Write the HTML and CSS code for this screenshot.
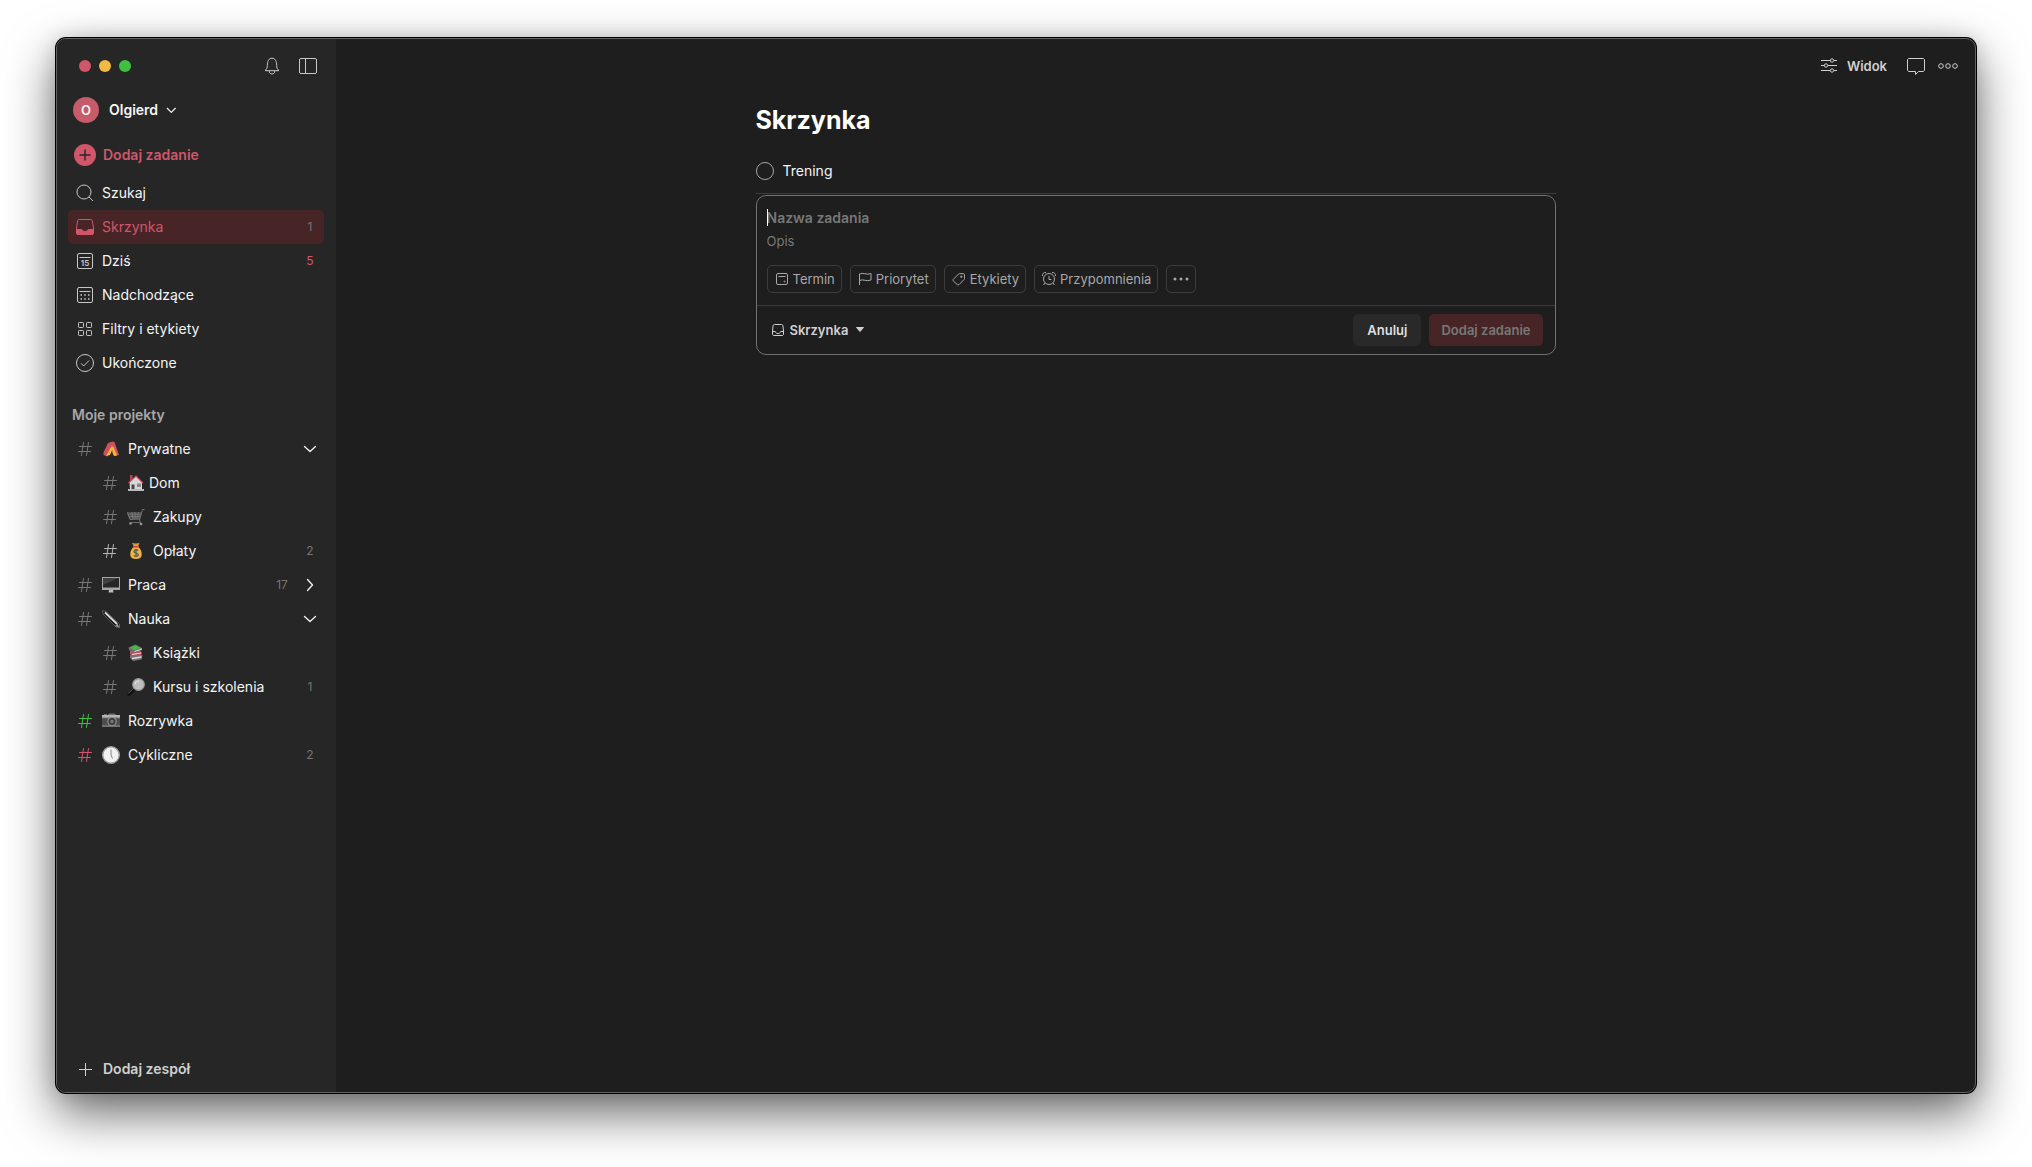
FILE: index.html
```html
<!DOCTYPE html>
<html lang="pl">
<head>
<meta charset="utf-8">
<meta name="viewport" content="width=device-width, initial-scale=1">
<title>Skrzynka</title>
<link rel="stylesheet" href="styles.css">
</head>
<body>
<svg class="sprite" aria-hidden="true">
  <symbol id="hash" viewBox="0 0 24 24"><path d="M10.500 5.500 8.500 18.500M15.500 5.500 13.500 18.500M6.500 9.500H18.500M5.500 14.500H17.500" fill="none" stroke="currentColor" stroke-linecap="round"/></symbol>
  <symbol id="chevron" viewBox="0 0 24 24"><path d="m6.500 9.500 5.500 5 5.500-5" fill="none" stroke="currentColor" stroke-width="1.300" stroke-linecap="round" stroke-linejoin="round"/></symbol>
</svg>
<div class="window">
  <aside class="sidebar">
    <div class="titlebar">
      <div class="lights"><i class="light red"></i><i class="light yellow"></i><i class="light green"></i></div>
      <div class="tools">
        <button class="icon-button" aria-label="Powiadomienia"><svg class="icon" viewBox="0 0 24 24"><path d="M5 16.700c1.600-1.300 2.300-2.700 2.300-5.200 0-4.300 1.500-7.300 4.700-7.300s4.700 3 4.700 7.300c0 2.500.7 3.900 2.300 5.200zM9.200 17c0 4 5.600 4 5.600 0"/></svg></button>
        <button class="icon-button" aria-label="Pasek boczny"><svg class="icon" viewBox="0 0 24 24"><rect x="3.500" y="4.500" width="17" height="15" rx="1.500"/><path d="M9.500 4.500v15"/></svg></button>
      </div>
    </div>
    <button class="profile"><span class="avatar">O</span><span>Olgierd</span><svg class="small-icon" viewBox="0 0 16 16"><path d="m3 6 4.300 4.300L11.600 6" stroke-width="1.200"/></svg></button>
    <button class="add-task"><svg class="icon" viewBox="0 0 24 24"><circle cx="12" cy="12" r="11" fill="#d1566a" stroke="none"/><path d="M12 6.500v11M6.500 12h11" stroke="#262626" stroke-width="1.400"/></svg><span>Dodaj zadanie</span></button>
    <nav class="nav">
      <a class="row" href="#szukaj"><svg class="icon" viewBox="0 0 24 24"><circle cx="11" cy="11" r="7"/><path d="m16 16 4 4"/></svg><span>Szukaj</span></a>
      <a class="row active" href="#skrzynka"><svg class="icon" viewBox="0 0 24 24"><path d="M6.200 4.500h11.600c.7 0 1.300.4 1.500 1.100l1.200 7.400v5c0 1-.7 1.500-1.500 1.500H5c-.8 0-1.500-.5-1.500-1.500v-5l1.200-7.400c.2-.7.800-1.100 1.500-1.100z"/><path d="M3.500 14.500h4.700c.6 0 .9.200 1.200.7 1.200 1.700 4 1.700 5.200 0 .3-.5.600-.7 1.200-.7h4.700V18c0 1-.7 1.500-1.500 1.500H5c-.8 0-1.500-.5-1.500-1.500z" fill="currentColor"/></svg><span>Skrzynka</span><span class="count">1</span></a>
      <a class="row" href="#dzis"><svg class="icon" viewBox="0 0 24 24"><rect x="4.500" y="4.500" width="15" height="15" rx="1.500"/><path d="M6.500 8.500h11"/><text class="day" x="12" y="17" text-anchor="middle">15</text></svg><span>Dziś</span><span class="count due">5</span></a>
      <a class="row" href="#nadchodzace"><svg class="icon" viewBox="0 0 24 24"><rect x="4.500" y="4.500" width="15" height="15" rx="1.500"/><path d="M6.500 8.500h11"/><path d="M7.500 12h1.500M11.250 12h1.500M15 12h1.500M7.500 16h1.500M11.250 16h1.500M15 16h1.500" stroke-width="1.500"/></svg><span>Nadchodzące</span></a>
      <a class="row" href="#filtry"><svg class="icon" viewBox="0 0 24 24"><rect x="5.500" y="5.500" width="5" height="5" rx=".8"/><rect x="13.500" y="5.500" width="5" height="5" rx=".8"/><rect x="5.500" y="13.500" width="5" height="5" rx=".8"/><rect x="13.500" y="13.500" width="5" height="5" rx=".8"/></svg><span>Filtry i etykiety</span></a>
      <a class="row" href="#ukonczone"><svg class="icon" viewBox="0 0 24 24"><circle cx="12" cy="12" r="8.500"/><path d="m8 12.300 2.700 2.700 5.300-5.500"/></svg><span>Ukończone</span></a>
    </nav>
    <h2 class="section">Moje projekty</h2>
    <nav class="nav">
      <a class="row" href="#prywatne"><svg class="hash" viewBox="0 0 24 24"><use href="#hash"/></svg><svg class="emoji" viewBox="0 0 18 18"><path d="M1.500 12.500 6 3l4.500-1.500 2 .5 4.500 13-3.500.7L10 9l-4.500 7.500L1.500 15z" fill="#d1505f"/><path d="m9.300 6.500 2 0 3.700 9-3 .5-1.500-3L8 15l-4 1z" fill="#f2b53d"/><path d="m10.200 10 .6 5H8z" fill="#3d2b2b"/></svg><span>Prywatne</span><svg class="chevron" viewBox="0 0 24 24"><use href="#chevron"/></svg></a>
      <a class="row nested tight" href="#dom"><svg class="hash" viewBox="0 0 24 24"><use href="#hash"/></svg><svg class="emoji" viewBox="0 0 18 18"><path d="M3 1h2.500v6H3z" fill="#b34650"/><path d="M2.500 8.500 9 2.500l6 6V16h-12z" fill="#d6d6d6"/><path d="m1.500 9 7.500-7 7 7" fill="none" stroke="#d1505f" stroke-width="1.100"/><path d="M4.500 10.500h3V16h-3z" fill="#4a4545"/><path d="M10 9.500h4V13h-4z" fill="#888"/><path d="M1 15h16v2H1z" fill="#b9b9b9"/></svg><span>Dom</span></a>
      <a class="row nested" href="#zakupy"><svg class="hash" viewBox="0 0 24 24"><use href="#hash"/></svg><svg class="emoji" viewBox="0 0 18 18"><path d="M0 4h15l-2 7-10 .5z" fill="#4b4b4b"/><path d="M17.500 1.500h-2L12.500 12l1 2.500H4M0 4l3 7.500 10-.5M1 6.200h13.500M2 8.500h12M5 4l1 7M8 4v7M11.500 4 10 11" fill="none" stroke="#808080" stroke-width=".8"/><circle cx="3.500" cy="15.500" r="1.300" fill="#999"/><circle cx="14" cy="16" r="1.300" fill="#999"/></svg><span>Zakupy</span></a>
      <a class="row nested bright" href="#oplaty"><svg class="hash" viewBox="0 0 24 24"><use href="#hash"/></svg><svg class="emoji" viewBox="0 0 18 18"><path d="M5 .8c2 1 5.500 1 7.500 0L11 5H7z" fill="#d99a35"/><path d="M7 4.500h4c2.500 2 4 5 3.700 8.500-.2 2.800-2 4-5.700 4s-5.500-1.200-5.700-4C3 9.500 4.500 6.500 7 4.500z" fill="#f0b33e"/><path d="M6 4.800h6" stroke="#c94c4c" stroke-width="1.600"/><path d="M11.300 8.500C9.500 7.200 7 7.700 7 9.500c0 2 4.300 1.200 4.300 3.200 0 1.800-2.800 2-4.600.8M9 7v8" fill="none" stroke="#55605c" stroke-width="1.300"/></svg><span>Opłaty</span><span class="count">2</span></a>
      <a class="row" href="#praca"><svg class="hash" viewBox="0 0 24 24"><use href="#hash"/></svg><svg class="emoji" viewBox="0 0 18 18"><path d="M0 1h18v13H0z" fill="#a5a5a5"/><path d="M1 2h16v9.500H1z" fill="#252525"/><path d="M1 2h15L1 9z" fill="#414141"/><path d="M7 14h4l.5 2.500h-5z" fill="#bdbdbd"/></svg><span>Praca</span><span class="count">17</span><svg class="chevron closed" viewBox="0 0 24 24"><use href="#chevron"/></svg></a>
      <a class="row" href="#nauka"><svg class="hash" viewBox="0 0 24 24"><use href="#hash"/></svg><svg class="emoji" viewBox="0 0 18 18"><path d="M.5.5 4 1.500l13.500 12.500v3.500L14 17 1.500 4.500z" fill="#111" stroke="#777" stroke-width=".7"/><path d="m3 2.500 12 11.500" stroke="#dedede" stroke-width="1.800"/><path d="m13 16 2.500-2.500 2 4z" fill="#999"/></svg><span>Nauka</span><svg class="chevron" viewBox="0 0 24 24"><use href="#chevron"/></svg></a>
      <a class="row nested" href="#ksiazki"><svg class="hash" viewBox="0 0 24 24"><use href="#hash"/></svg><svg class="emoji" viewBox="0 0 18 18"><path d="m3 11 9-2 3.500 2.500-1 4L6 17l-3-3z" fill="#737373"/><path d="m5 14.500 9.500-1.500" stroke="#ddd" stroke-width="1.300"/><path d="m3 7 10-1 2 3-1 2.500-8 1L3 10z" fill="#c74b5d"/><path d="m5 10.500 9-1.500" stroke="#e2e2e2" stroke-width="1.200"/><path d="m1.500 3.500 7-3 6.500 3.500v2L7 9 2 6z" fill="#707070"/><path d="m3 3.500 5.500-2L13.500 4 7.500 6z" fill="#3fbd43"/><path d="M7.500 7.500 15 5" stroke="#ddd"/></svg><span>Książki</span></a>
      <a class="row nested" href="#kursy"><svg class="hash" viewBox="0 0 24 24"><use href="#hash"/></svg><svg class="emoji" viewBox="0 0 18 18"><path d="m2 16 5.500-5.500" stroke="#0f0f0f" stroke-width="3.400" stroke-linecap="round"/><path d="m1.200 15.500 5.500-5.500" stroke="#777" stroke-width=".9"/><circle cx="11.500" cy="6.500" r="5.800" fill="#bdbdbd" stroke="#999" stroke-width="1.200"/><path d="M8 6c.5-2 2-3 4-3" fill="none" stroke="#eee"/></svg><span>Kursu i szkolenia</span><span class="count">1</span></a>
      <a class="row" href="#rozrywka"><svg class="hash green-hash" viewBox="0 0 24 24"><use href="#hash"/></svg><svg class="emoji" viewBox="0 0 18 18"><path d="M0 3h2V2h3v1h1l1-1.500h6L14 3h4v12H0z" fill="#717171"/><path d="M0 3h18v2.500H0z" fill="#b4b4b4"/><path d="M0 6.500h18V13H0z" fill="#4d4d4d"/><circle cx="10" cy="9.500" r="4.800" fill="#8c8c8c"/><circle cx="10" cy="9.500" r="3.500" fill="#3b3b3b"/><circle cx="10" cy="9.500" r="1.800" fill="#777"/></svg><span>Rozrywka</span></a>
      <a class="row" href="#cykliczne"><svg class="hash red-hash" viewBox="0 0 24 24"><use href="#hash"/></svg><svg class="emoji" viewBox="0 0 18 18"><circle cx="9" cy="9" r="8.300" fill="#f1f1f1" stroke="#9d9d9d" stroke-width="1.400"/><path d="M9 3.500V9l1.500 3.500" fill="none" stroke="#888"/></svg><span>Cykliczne</span><span class="count">2</span></a>
    </nav>
    <button class="add-team"><svg class="icon" viewBox="0 0 24 24"><path d="M12.500 6v13M6 12.500h13"/></svg><span>Dodaj zespół</span></button>
  </aside>
  <main class="main">
    <header class="toolbar">
      <button class="view-button"><svg class="icon" viewBox="0 0 24 24"><path d="M4 6.500h9.500M17 6.500h3M4 11.500h3.500M11 11.500h9M4 16.500h9.500M17 16.500h3"/><circle cx="15" cy="6.500" r="1.700"/><circle cx="9" cy="11.500" r="1.700"/><circle cx="15" cy="16.500" r="1.700"/></svg><span>Widok</span></button>
      <button class="icon-button" aria-label="Komentarze"><svg class="icon" viewBox="0 0 24 24"><path d="M5 4.500h14c.8 0 1.500.7 1.500 1.500v10c0 .8-.7 1.500-1.500 1.500h-4.500l-3 3v-3H5c-.8 0-1.500-.7-1.500-1.500V6c0-.8.7-1.500 1.500-1.500z"/></svg></button>
      <button class="icon-button" aria-label="Więcej"><svg class="icon" viewBox="0 0 24 24"><circle cx="5" cy="12" r="2.300"/><circle cx="12" cy="12" r="2.300"/><circle cx="19" cy="12" r="2.300"/></svg></button>
    </header>
    <div class="content">
      <h1 class="title">Skrzynka</h1>
      <label class="task"><input class="check" type="checkbox"><span>Trening</span></label>
      <form class="editor">
        <div class="fields">
          <div class="name-field"><input class="name-input" type="text" placeholder="Nazwa zadania" aria-label="Nazwa zadania"><i class="caret"></i></div>
          <input class="description-input" type="text" placeholder="Opis" aria-label="Opis">
          <div class="chips">
            <button class="chip" type="button"><svg class="small-icon" viewBox="0 0 16 16"><rect x="2.500" y="2.500" width="11" height="11" rx="1.500"/><path d="M4.500 5.500h7"/><circle cx="10.500" cy="10.500" r=".5"/></svg>Termin</button>
            <button class="chip" type="button"><svg class="small-icon" viewBox="0 0 16 16"><path d="M2.500 14V3c3.500-2 7 1.500 11.500-.5V9C9.500 11 6 7.500 2.500 9.500"/></svg>Priorytet</button>
            <button class="chip" type="button"><svg class="small-icon" viewBox="0 0 16 16"><path d="m2.300 8.300 5.200-5.200c.3-.3.7-.5 1.100-.5l3.800.1c.6 0 1 .4 1 1l.1 3.700c0 .5-.2.900-.5 1.200l-5 5c-.5.500-1.200.5-1.700 0l-4-3.700c-.5-.5-.5-1.100 0-1.600z"/><circle cx="10.300" cy="5.700" r=".7" fill="currentColor"/></svg>Etykiety</button>
            <button class="chip" type="button"><svg class="small-icon" viewBox="0 0 16 16"><circle cx="8" cy="8" r="5.500"/><path d="M8 5v3.500h2.500M1.500 5C1 3 3 1 5 1.500M14.500 5c.5-2-1.500-4-3.500-3.500M4 12l-1.500 2M12 12l1.500 2"/></svg>Przypomnienia</button>
            <button class="chip more" type="button" aria-label="Więcej opcji"><svg class="small-icon" viewBox="0 0 16 16"><g fill="currentColor" stroke="none"><circle cx="2" cy="8" r="1.500"/><circle cx="8" cy="8" r="1.500"/><circle cx="14" cy="8" r="1.500"/></g></svg></button>
          </div>
        </div>
        <footer class="actions">
          <button class="project" type="button"><svg class="small-icon" viewBox="0 0 16 16"><path d="M4.500 2.500h7c.7 0 1.200.4 1.400 1.100l.6 5.400v3c0 .9-.6 1.500-1.500 1.500H4c-.9 0-1.500-.6-1.500-1.500V9l.6-5.400c.2-.7.700-1.100 1.400-1.100zM2.500 9.500h2.700c.6 2.700 5 2.700 5.600 0h2.700"/></svg><span>Skrzynka</span><svg class="small-icon" viewBox="0 0 16 16"><path d="M4.500 5.500h7L8 9.500z" fill="currentColor"/></svg></button>
          <button class="button" type="button">Anuluj</button>
          <button class="button primary" type="submit" disabled>Dodaj zadanie</button>
        </footer>
      </form>
    </div>
  </main>
</div>
</body>
</html>
```
FILE: styles.css
```css
* { box-sizing: border-box; }
body {
  margin: 0;
  min-height: 100vh;
  padding: 38px 56px 74px;
  display: flex;
  background: #fff;
  color: #f5f5f5;
  font: 14px/20px Inter, "Liberation Sans", sans-serif;
}
button, input { font: inherit; color: inherit; background: none; border: 0; padding: 0; margin: 0; }
button { display: flex; align-items: center; }
a { color: inherit; text-decoration: none; }
h1, h2 { margin: 0; }
svg { flex: none; }
.sprite { position: absolute; width: 0; height: 0; }

.window {
  flex: 1;
  display: flex;
  border: 1px solid #626464;
  border-radius: 10px;
  background: #1e1e1e;
  box-shadow: 0 0 0 1px #000, 0 20px 50px rgba(0, 0, 0, .6), 0 0 20px rgba(0, 0, 0, .15);
}
.icon, .small-icon { width: 24px; height: 24px; fill: none; stroke: currentColor; stroke-linejoin: round; }
.small-icon { width: 16px; height: 16px; }

.sidebar {
  width: 279px;
  flex: none;
  display: flex;
  flex-direction: column;
  padding: 11px 12px 6px 11px;
  border-radius: 9px 0 0 9px;
  background: #262626;
}
.titlebar { display: flex; align-items: center; justify-content: space-between; height: 32px; padding: 0 4px 0 11px; }
.lights { display: flex; gap: 8px; }
.light { width: 12px; height: 12px; border-radius: 50%; }
.red { background: #d1566a; }
.yellow { background: #f2b945; }
.green { background: #3fc13f; }
.tools { display: flex; gap: 12px; color: #c8c8c8; }
.profile { height: 36px; margin-top: 10px; padding-left: 5px; gap: 6px; font-weight: 600; }
.avatar { width: 26px; height: 26px; margin-right: 4px; border-radius: 50%; background: #c65b6a; font-size: 13px; line-height: 26px; text-align: center; }
.add-task { height: 34px; margin: 10px 0 4px; padding-left: 5px; gap: 6px; color: #d1566a; font-weight: 600; }
.nav { display: flex; flex-direction: column; }
.row { display: flex; align-items: center; height: 34px; padding: 0 2px 0 5px; border-radius: 5px; }
.row .icon { margin-right: 5px; color: #c8c8c8; }
.active, .row.active .icon { color: #d1566a; }
.active { background: #472526; }
.day { font-size: 8px; font-weight: 600; fill: currentColor; stroke: none; }
.count { min-width: 24px; margin-left: auto; text-align: center; font-size: 12px; color: #757575; }
.due { color: #d1566a; }
.section { margin-top: 18px; padding: 7px 4px; color: #a8a8a8; font-size: 14px; line-height: 20px; font-weight: 600; }
.nested { padding-left: 30px; }
.hash { width: 24px; height: 24px; margin-right: 5px; color: #787878; }
.bright .hash { color: #b5b5b5; }
.green-hash { color: #3fc13f; }
.red-hash { color: #d1566a; }
.emoji { width: 18px; height: 18px; margin-right: 8px; }
.tight .emoji { margin-right: 4px; }
.chevron { width: 24px; height: 24px; margin-left: auto; }
.count + .chevron { margin-left: 4px; }
.closed { transform: rotate(-90deg); }
.add-team { height: 34px; margin-top: auto; padding-left: 5px; gap: 6px; color: #d0d0d0; font-weight: 600; }

.main { flex: 1; min-width: 0; display: flex; flex-direction: column; }
.toolbar { display: flex; justify-content: flex-end; align-items: center; height: 54px; padding-right: 15px; gap: 8px; color: #d0d0d0; }
.view-button { gap: 6px; margin-right: 9px; font-size: 13px; font-weight: 600; }
.content { width: 100%; max-width: 800px; margin: 0 auto; }
.title { padding: 10px 0 8px; font-size: 25px; line-height: 34px; font-weight: 700; color: #fff; }
.task { display: flex; align-items: center; gap: 9px; height: 49px; padding-top: 3px; margin-bottom: 1px; border-bottom: 1px solid #3d3d3d; }
.check { appearance: none; width: 18px; height: 18px; border: 1px solid #a5a5a5; border-radius: 50%; }
.editor { border: 1px solid #6f7373; border-radius: 10px; }
.fields { padding: 12px 10px; }
.name-field { position: relative; }
.name-input, .description-input { display: block; width: 100%; height: 20px; outline: 0; }
.name-input { font-weight: 600; }
.description-input { margin-top: 3px; font-size: 13px; }
.name-input::placeholder, .description-input::placeholder { color: #777; opacity: 1; }
.caret { position: absolute; left: 0; top: 1px; width: 1px; height: 17px; background: #fff; }
.chips { display: flex; flex-wrap: wrap; gap: 8px; margin-top: 14px; }
.chip { height: 28px; padding: 0 6px; gap: 3px; border: 1px solid #3d3d3d; border-radius: 5px; color: #a8a8a8; font-size: 13px; }
.actions { display: flex; align-items: center; gap: 8px; padding: 8px 12px; border-top: 1px solid #3d3d3d; }
.project { gap: 4px; margin-right: auto; padding-left: 1px; color: #d0d0d0; font-size: 13px; font-weight: 600; }
.button { height: 32px; padding: 0 14px; border-radius: 5px; background: #292929; color: #dedede; font-size: 13px; font-weight: 600; }
.primary { padding: 0 12px; background: #472526; color: #777; }
```
